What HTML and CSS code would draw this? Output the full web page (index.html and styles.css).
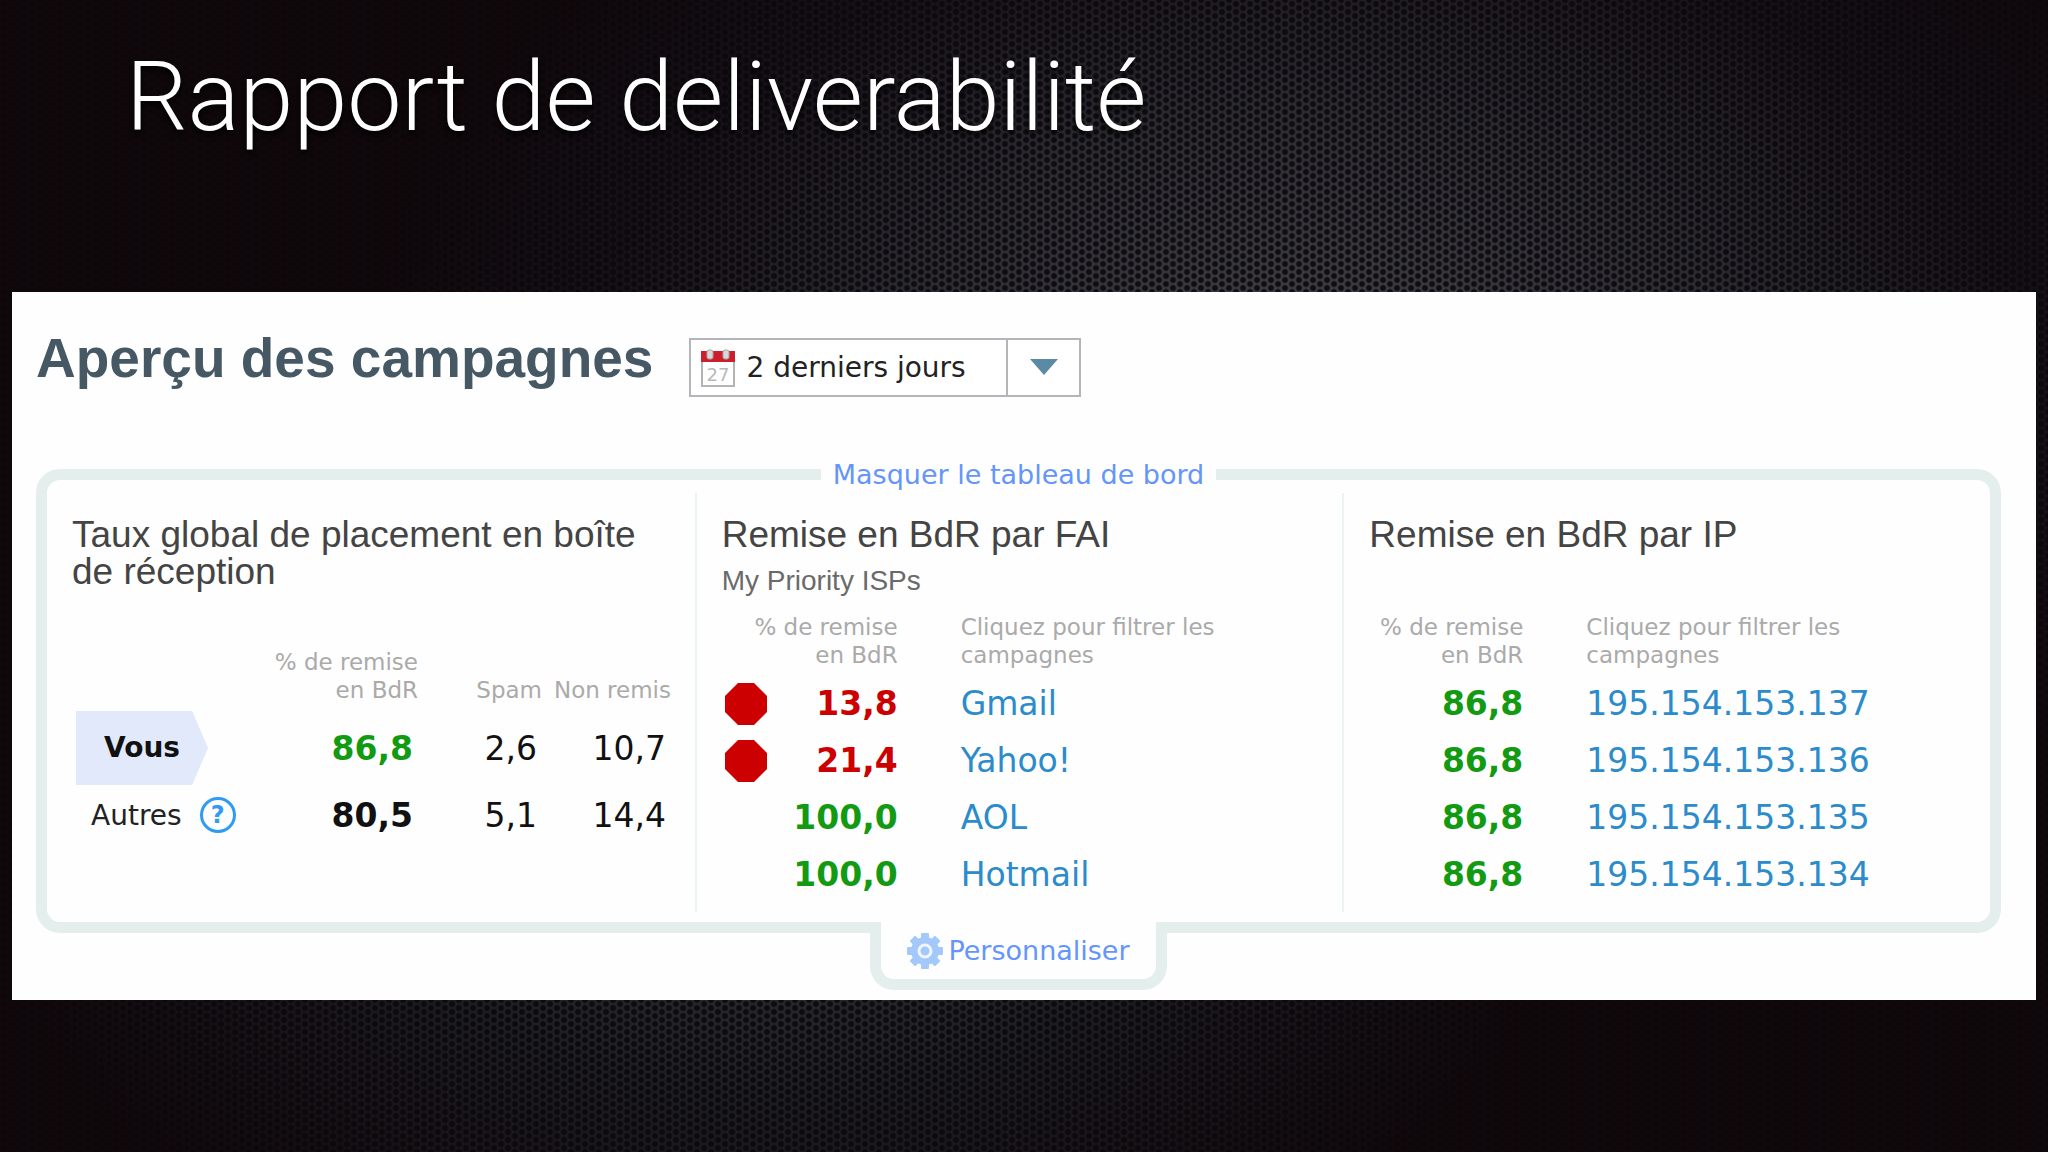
FILE: index.html
```html
<!DOCTYPE html>
<html lang="fr">
<head>
    <meta charset="UTF-8">
    <meta name="viewport" content="width=device-width, initial-scale=1.0">
    <title>Rapport de deliverabilité</title>
    <link rel="stylesheet" href="styles.css">
</head>
<body>
<h1 class="slide-title">Rapport de deliverabilité</h1>

<main class="card">
    <div class="card-header">
        <h2>Aperçu des campagnes</h2>
        <div class="period">
            <svg class="calendar" viewBox="0 0 34 38" aria-hidden="true">
                <rect x="1" y="4" width="32" height="33" fill="#fff" stroke="#b4b4b4" stroke-width="2"/>
                <rect x="0" y="2" width="34" height="11" fill="#cc1f2b"/>
                <rect x="6" y="1" width="6" height="9" rx="2" fill="#d8d8d8" stroke="#a5a5a5"/>
                <rect x="22" y="1" width="6" height="9" rx="2" fill="#d8d8d8" stroke="#a5a5a5"/>
                <text x="17" y="32" text-anchor="middle">27</text>
            </svg>
            <select aria-label="Période">
                <option>2 derniers jours</option>
                <option>7 derniers jours</option>
                <option>30 derniers jours</option>
            </select>
            <svg class="arrow" viewBox="0 0 28 16" aria-hidden="true">
                <path d="M0 0h28L14 16z" fill="#5b8aa6"/>
            </svg>
        </div>
    </div>

    <section class="dashboard">
        <a class="toggle" href="#">Masquer le tableau de bord</a>
        <div class="columns">
            <div class="column">
                <h3>Taux global de placement en boîte de réception</h3>
                <table class="global">
                    <thead>
                    <tr>
                        <td class="label"></td>
                        <th class="rate">% de remise<br>en BdR</th>
                        <th class="spam">Spam</th>
                        <th>Non remis</th>
                    </tr>
                    </thead>
                    <tbody>
                    <tr class="you">
                        <th class="label"><span class="tag">Vous</span></th>
                        <td class="rate good">86,8</td>
                        <td>2,6</td>
                        <td>10,7</td>
                    </tr>
                    <tr>
                        <th class="label">
                            <span class="others">Autres
                                <button class="help" type="button" aria-label="Aide">?</button>
                            </span>
                        </th>
                        <td class="rate">80,5</td>
                        <td>5,1</td>
                        <td>14,4</td>
                    </tr>
                    </tbody>
                </table>
            </div>

            <div class="column">
                <h3>Remise en BdR par FAI</h3>
                <p class="subtitle">My Priority ISPs</p>
                <table class="filter">
                    <thead>
                    <tr>
                        <th class="rate" colspan="2">% de remise<br>en BdR</th>
                        <th class="name">Cliquez pour filtrer les<br>campagnes</th>
                    </tr>
                    </thead>
                    <tbody>
                    <tr>
                        <td class="status"><svg class="stop" viewBox="0 0 42 42" aria-hidden="true"><path d="M13 0h16l13 13v16L29 42H13L0 29V13z"/></svg></td>
                        <td class="rate bad">13,8</td>
                        <td class="name"><a href="#">Gmail</a></td>
                    </tr>
                    <tr>
                        <td class="status"><svg class="stop" viewBox="0 0 42 42" aria-hidden="true"><path d="M13 0h16l13 13v16L29 42H13L0 29V13z"/></svg></td>
                        <td class="rate bad">21,4</td>
                        <td class="name"><a href="#">Yahoo!</a></td>
                    </tr>
                    <tr>
                        <td class="status"></td>
                        <td class="rate good">100,0</td>
                        <td class="name"><a href="#">AOL</a></td>
                    </tr>
                    <tr>
                        <td class="status"></td>
                        <td class="rate good">100,0</td>
                        <td class="name"><a href="#">Hotmail</a></td>
                    </tr>
                    </tbody>
                </table>
            </div>

            <div class="column">
                <h3>Remise en BdR par IP</h3>
                <p class="subtitle"></p>
                <table class="filter by-ip">
                    <thead>
                    <tr>
                        <th class="rate">% de remise<br>en BdR</th>
                        <th class="name">Cliquez pour filtrer les<br>campagnes</th>
                    </tr>
                    </thead>
                    <tbody>
                    <tr>
                        <td class="rate good">86,8</td>
                        <td class="name"><a href="#">195.154.153.137</a></td>
                    </tr>
                    <tr>
                        <td class="rate good">86,8</td>
                        <td class="name"><a href="#">195.154.153.136</a></td>
                    </tr>
                    <tr>
                        <td class="rate good">86,8</td>
                        <td class="name"><a href="#">195.154.153.135</a></td>
                    </tr>
                    <tr>
                        <td class="rate good">86,8</td>
                        <td class="name"><a href="#">195.154.153.134</a></td>
                    </tr>
                    </tbody>
                </table>
            </div>
        </div>
    </section>

    <div class="tab">
        <a href="#">
            <svg class="gear" viewBox="0 0 36 36" aria-hidden="true">
                <g fill="#a3c8fc">
                    <circle cx="18" cy="18" r="14"/>
                    <rect x="14" y="0" width="8" height="36" rx="1"/>
                    <rect x="14" y="0" width="8" height="36" rx="1" transform="rotate(45 18 18)"/>
                    <rect x="14" y="0" width="8" height="36" rx="1" transform="rotate(90 18 18)"/>
                    <rect x="14" y="0" width="8" height="36" rx="1" transform="rotate(135 18 18)"/>
                </g>
                <circle cx="18" cy="18" r="6" fill="#a3c8fc" stroke="#f0f6ff" stroke-width="3"/>
            </svg>
            Personnaliser
        </a>
    </div>
</main>
</body>
</html>
```

FILE: styles.css
```css
* {
    box-sizing: border-box;
}

body {
    margin: 0;
    min-height: 100vh;
    font-family: "DejaVu Sans", Verdana, sans-serif;
    color: #222;
    /* perforated metal, lit from above right and below left */
    background-color: #130709;
    background-image:
        radial-gradient(circle at 4px 4px, rgba(10, 8, 13, 0.9) 2px, transparent 4px),
        radial-gradient(circle at 4px 4px, rgba(10, 8, 13, 0.9) 2px, transparent 4px),
        radial-gradient(ellipse 46% 52% at 64% 32%, #48474d 0%, #2f2e34 45%, rgba(26, 23, 31, 0.7) 75%, transparent 100%),
        radial-gradient(ellipse 38% 40% at 38% 76%, #38383c 0%, #1f1f23 50%, transparent 100%);
    background-size: 14px 8px, 14px 8px, 100% 100%, 100% 100%;
    background-position: 0 0, 7px 4px, 0 0, 0 0;
}

h1,
h2,
h3,
p {
    margin: 0;
    font-weight: normal;
}

a {
    color: #6495fa;
    text-decoration: none;
}

.slide-title {
    height: 292px;
    padding: 41px 126px 0;
    font-family: "Roboto", "Helvetica Neue", sans-serif;
    font-size: 97px;
    font-weight: 300;
    line-height: 112px;
    color: #fff;
    text-shadow: 0 4px 6px #000;
}

.card {
    margin: 0 12px;
    padding: 0 35px 10px 24px;
    background: #fefefe;
}

.card-header {
    display: flex;
    align-items: flex-start;
    gap: 36px;
    height: 177px;
    padding-top: 36px;
}

.card-header h2 {
    font-family: "Liberation Sans", Arial, sans-serif;
    font-size: 55px;
    font-weight: bold;
    line-height: 60px;
    color: #455864;
}

.period {
    position: relative;
    margin-top: 10px;
}

.period select {
    appearance: none;
    width: 392px;
    height: 59px;
    padding: 0 80px 0 55px;
    border: 2px solid #b5b5b9;
    border-radius: 0;
    background: linear-gradient(#b5b5b9, #b5b5b9) 315px 0 / 2px 100% no-repeat #fff;
    font-family: inherit;
    font-size: 28px;
    color: #222;
}

.calendar {
    position: absolute;
    left: 12px;
    top: 11px;
    width: 34px;
    height: 38px;
}

.calendar text {
    font-size: 18px;
    fill: #b9b9b9;
}

.arrow {
    position: absolute;
    right: 23px;
    top: 21px;
    width: 28px;
    height: 16px;
    pointer-events: none;
}

.dashboard {
    display: flex;
    flex-direction: column;
    align-items: center;
    height: 464px;
    border: 11px solid #e4eeed;
    border-radius: 24px;
}

.toggle {
    margin-top: -24px;
    padding: 0 12px;
    background: #fefefe;
    font-size: 27px;
    line-height: 37px;
}

.columns {
    display: grid;
    grid-template-columns: repeat(3, 1fr);
    width: 100%;
    height: 419px;
}

.column {
    padding: 23px 20px 0 25px;
}

.column + .column {
    border-left: 2px solid #edf3f5;
}

.column h3 {
    padding-right: 20px;
    font-family: "Liberation Sans", Arial, sans-serif;
    font-size: 37px;
    line-height: 37px;
    color: #444;
}

.subtitle {
    height: 60px;
    padding-top: 8px;
    font-family: "Liberation Sans", Arial, sans-serif;
    font-size: 28px;
    line-height: 40px;
    color: #6a6a6a;
}

table {
    border-collapse: collapse;
    table-layout: fixed;
    font-size: 33px;
}

th,
td {
    padding: 0;
    text-align: right;
    white-space: nowrap;
}

thead th {
    padding-bottom: 6px;
    font-size: 23px;
    font-weight: normal;
    line-height: 28px;
    color: #aaa;
    vertical-align: bottom;
}

tbody .rate {
    font-weight: bold;
}

.good {
    color: #129a12;
}

.bad {
    color: #c00;
}

.global {
    width: 599px;
    margin-top: 58px;
}

.global .label {
    width: 188px;
    text-align: left;
    font-size: 28px;
    font-weight: normal;
}

.global thead .rate {
    width: 158px;
}

.global .spam {
    width: 124px;
}

.global tbody td {
    height: 58px;
    padding-right: 5px;
    color: #111;
}

.global .you td {
    height: 76px;
}

.global tbody .good {
    color: #129a12;
}

.tag {
    display: block;
    width: 132px;
    margin-left: 4px;
    padding-left: 28px;
    background: #e1e9fb;
    clip-path: polygon(0 0, 88% 0, 100% 50%, 88% 100%, 0 100%);
    font-weight: bold;
    line-height: 74px;
    color: #111;
}

.others {
    display: flex;
    align-items: center;
    gap: 18px;
    padding-left: 19px;
}

.help {
    width: 36px;
    height: 36px;
    padding: 0;
    border: 3px solid #2e9bf5;
    border-radius: 50%;
    background: none;
    font: bold 24px/30px "DejaVu Sans", sans-serif;
    color: #2e9bf5;
}

.filter .rate {
    width: 176px;
}

.filter .status {
    width: 46px;
}

.filter tbody .rate {
    width: 130px;
}

.filter .name {
    padding-left: 63px;
    text-align: left;
}

.filter tbody td {
    height: 57px;
}

.filter tbody a {
    color: #2b8bcb;
}

.by-ip .rate,
.by-ip tbody .rate {
    width: 154px;
}

.stop {
    display: block;
    width: 42px;
    height: 42px;
    margin-left: 3px;
    fill: #c00;
}

/* hangs from the frame and hides its border where they meet */
.tab {
    position: relative;
    width: fit-content;
    margin: -11px auto 0;
    padding: 7px 26px;
    border: 11px solid #e4eeed;
    border-top: 0;
    border-radius: 0 0 24px 24px;
    background: #fefefe;
}

.tab a {
    display: flex;
    align-items: center;
    gap: 5px;
    font-size: 27px;
    line-height: 43px;
}

.gear {
    width: 36px;
    height: 36px;
}
```
